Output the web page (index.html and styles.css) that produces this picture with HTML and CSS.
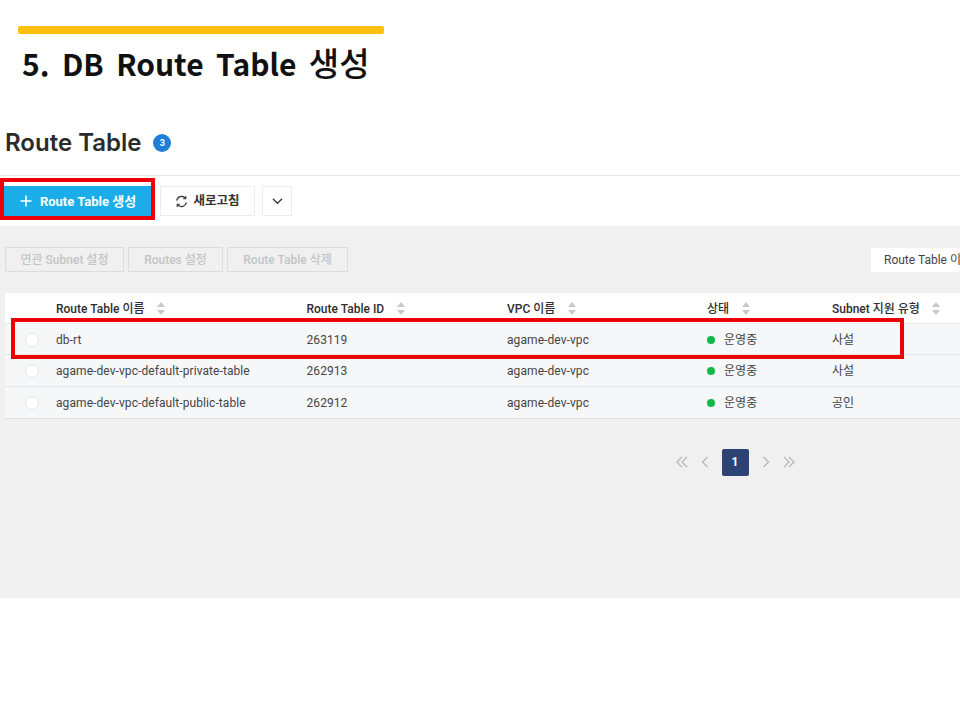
FILE: index.html
```html
<!DOCTYPE html>
<html lang="ko">
<head>
<meta charset="utf-8">
<title>5. DB Route Table 생성</title>
<link rel="stylesheet" href="styles.css">
</head>
<body>
<div class="slide">
  <header class="slide-head">
    <div class="accent"></div>
    <h1 class="slide-title">5. DB Route Table <span class="title-ko">생성</span></h1>
  </header>
  <div class="page-head">
    <h2 class="page-title">Route Table</h2>
    <span class="count">3</span>
  </div>
  <div class="toolbar">
    <button class="btn primary"><svg class="ico-plus" viewBox="0 0 12 12"><path d="M6 .5v11M.5 6h11"/></svg>Route Table 생성</button>
    <button class="btn refresh"><svg class="ico-refresh" viewBox="0 0 14 14"><path d="M1.8 6A5.3 5.3 0 0 1 11.2 3.6M12.2 8A5.3 5.3 0 0 1 2.8 10.4"/><path d="M11.6 1.2v2.8H8.8M2.4 12.8V10h2.8"/></svg>새로고침</button>
    <button class="btn more"><svg class="ico-chev" viewBox="0 0 12 8"><path d="M1 1.5l5 5 5-5"/></svg></button>
  </div>
  <section class="panel">
    <div class="actions">
      <button class="btn-off a1">연관 Subnet 설정</button>
      <button class="btn-off a2">Routes 설정</button>
      <button class="btn-off a3">Route Table 삭제</button>
      <div class="select">Route Table 이름</div>
    </div>
    <div class="table">
      <div class="row head">
        <span></span>
        <span class="th">Route Table 이름<i class="sort"></i></span>
        <span class="th">Route Table ID<i class="sort"></i></span>
        <span class="th">VPC 이름<i class="sort"></i></span>
        <span class="th">상태<i class="sort"></i></span>
        <span class="th">Subnet 지원 유형<i class="sort"></i></span>
      </div>
      <div class="row">
        <span class="radio"></span><span>db-rt</span><span>263119</span><span>agame-dev-vpc</span>
        <span class="status"><i class="dot"></i>운영중</span><span>사설</span>
      </div>
      <div class="row">
        <span class="radio"></span><span>agame-dev-vpc-default-private-table</span><span>262913</span><span>agame-dev-vpc</span>
        <span class="status"><i class="dot"></i>운영중</span><span>사설</span>
      </div>
      <div class="row">
        <span class="radio"></span><span>agame-dev-vpc-default-public-table</span><span>262912</span><span>agame-dev-vpc</span>
        <span class="status"><i class="dot"></i>운영중</span><span>공인</span>
      </div>
    </div>
    <nav class="pager">
      <svg class="pg" viewBox="0 0 14 14"><path d="M7 2L2 7l5 5M12 2L7 7l5 5"/></svg>
      <svg class="pg" viewBox="0 0 14 14"><path d="M9.5 2L4.5 7l5 5"/></svg>
      <span class="pg-current">1</span>
      <svg class="pg" viewBox="0 0 14 14"><path d="M4.5 2l5 5-5 5"/></svg>
      <svg class="pg" viewBox="0 0 14 14"><path d="M2 2l5 5-5 5M7 2l5 5-5 5"/></svg>
    </nav>
  </section>
  <div class="mark mark-btn"></div>
  <div class="mark mark-row"></div>
</div>
</body>
</html>
```
FILE: styles.css
```css
* { box-sizing: border-box; }
html, body { margin: 0; padding: 0; background: #fff; }
.slide {
  position: relative;
  width: 960px;
  height: 720px;
  overflow: hidden;
  font-family: Roboto, "Noto Sans CJK KR", sans-serif;
  color: #333;
}
.slide-head { padding: 26px 0 0 18px; height: 127px; }
.accent { width: 366px; height: 8px; background: #fdc010; border-radius: 2px; }
.slide-title {
  margin: 6px 0 0 4px;
  font: 700 30px/44px "Noto Sans CJK KR", "Noto Sans", sans-serif;
  word-spacing: 4px;
  color: #111;
  white-space: nowrap;
}
.title-ko { font-size: 33px; font-weight: 500; }
.page-head { display: flex; align-items: center; height: 30px; padding-left: 5px; margin-top: 1px; }
.page-title { margin: 0; font: 600 24px/30px Inter, Roboto, sans-serif; color: #2b2b2b; }
.count {
  margin-left: 12px; width: 18px; height: 18px; border-radius: 50%;
  background: #1f7fd6; color: #fff;
  font: 700 9px/18px Roboto, sans-serif; text-align: center;
}
.toolbar {
  display: flex; align-items: flex-start;
  margin-top: 17px; height: 51px; padding: 10px 0 0 4px;
  border-top: 1px solid #e6e6e6;
}
.btn {
  display: flex; align-items: center; justify-content: center;
  height: 30px; padding: 0; background: #fff; border: 1px solid #ececec;
  font: 700 12.5px/1 Roboto, "Noto Sans CJK KR", sans-serif; color: #333;
}
.btn.primary { width: 148px; background: #1bade9; border-color: #1bade9; color: #fff; margin-right: 8px; font-size: 13px; }
.ico-plus { width: 12px; height: 12px; margin-right: 8px; fill: none; stroke: #fff; stroke-width: 1.6; }
.btn.refresh { width: 95px; margin-right: 7px; }
.ico-refresh { width: 13px; height: 13px; margin-right: 5px; fill: none; stroke: #333; stroke-width: 1.2; }
.btn.more { width: 30px; }
.ico-chev { width: 11px; height: 8px; fill: none; stroke: #333; stroke-width: 1.3; }
.panel { height: 372px; background: #f0f0f0; padding-top: 21px; overflow: hidden; }
.actions { display: flex; align-items: center; gap: 4px; height: 25px; padding-left: 5px; }
.btn-off {
  height: 25px; padding: 1px 0 0; background: #f0f0f0; border: 1px solid #dcdcdc; border-radius: 1px;
  font: 500 12px/1 Roboto, "Noto Sans CJK KR", sans-serif; color: #c4c4c4;
}
.a1 { width: 119px; }
.a2 { width: 95px; }
.a3 { width: 121px; }
.select {
  margin-left: auto; width: 89px; height: 24px; padding: 0 0 0 13px;
  background: #fff; border-radius: 2px;
  font: 400 12px/24px Roboto, "Noto Sans CJK KR", sans-serif; color: #444;
  white-space: nowrap; overflow: hidden;
}
.table { margin: 21px 0 0 5px; border-bottom: 1px solid #dfdfdf; }
.row {
  display: grid; grid-template-columns: 51px 250.5px 200.5px 200px 125px 1fr;
  align-items: center; height: 31.33px; padding-top: 1px;
  background: #f6f7f9; border-bottom: 1px solid #e3e3e3;
  font: 400 12px/1 Roboto, "Noto Sans CJK KR", sans-serif; letter-spacing: .08px; color: #444;
  white-space: nowrap;
}
.row:last-child { border-bottom: 0; }
.row.head { height: 31px; background: #fff; border-bottom: 1px solid #e8e8e8; }
.th { display: flex; align-items: center; font-weight: 500; letter-spacing: 0; color: #2e2e2e; }
.sort { position: relative; width: 8px; height: 13px; margin-left: 12.5px; }
.sort::before, .sort::after {
  content: ""; position: absolute; left: 0;
  border-left: 4px solid transparent; border-right: 4px solid transparent;
}
.sort::before { top: 0; border-bottom: 5px solid #c8c8c8; }
.sort::after { bottom: 0; border-top: 5px solid #c8c8c8; }
.radio {
  justify-self: start; width: 14px; height: 14px; margin-left: 20px;
  background: #fff; border: 1px solid #e4e4e4; border-radius: 50%;
}
.status { display: flex; align-items: center; }
.dot { width: 8px; height: 8px; margin-right: 9px; background: #10b84a; border-radius: 50%; }
.pager { display: flex; justify-content: center; align-items: center; gap: 9px; margin: 30px 0 0 625px; width: 220px; height: 27px; }
.pg { width: 14px; height: 14px; fill: none; stroke: #b9b9b9; stroke-width: 1.4; }
.pg-current {
  width: 27px; height: 27px; margin: 0 1px; background: #2d4373; border-radius: 2px;
  color: #fff; font: 700 12px/27px Roboto, sans-serif; text-align: center;
}
.mark { position: absolute; border: 4.5px solid #ec0009; }
.mark-btn { left: 0; top: 178px; width: 155px; height: 42px; }
.mark-row { left: 11px; top: 318px; width: 893px; height: 41px; }
```
